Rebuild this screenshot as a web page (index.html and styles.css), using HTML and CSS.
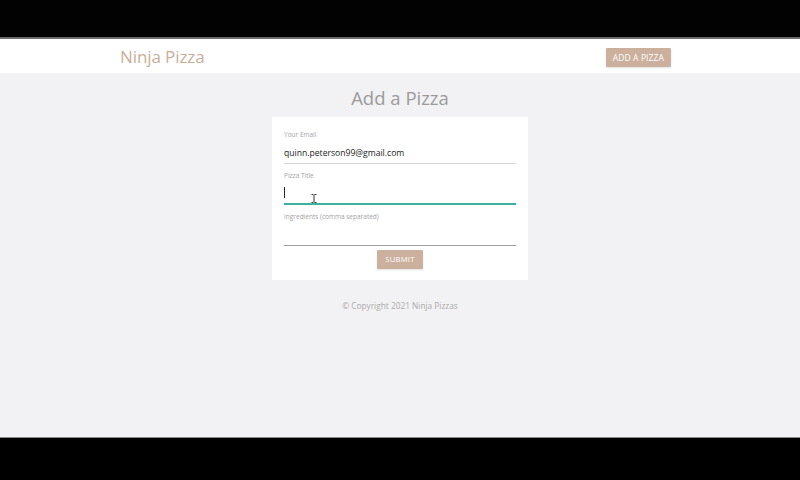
FILE: index.html
```html
<!DOCTYPE html>
<html>
<head>
<meta charset="utf-8">
<link rel="stylesheet" href="styles.css">
</head>
<body>
<div class="topband"></div>
<div class="screen">
  <nav class="nav">
    <div class="container nav-inner">
      <a class="brand">Ninja Pizza</a>
      <a class="btn">ADD A PIZZA</a>
    </div>
  </nav>
  <main class="main">
    <h4 class="title">Add a Pizza</h4>
    <form class="card">
      <label class="label">Your Email</label>
      <div class="field">quinn.peterson99@gmail.com</div>
      <label class="label">Pizza Title</label>
      <div class="field active"><span class="caret"></span><span class="ibeam"><svg width="6" height="9" viewBox="0 0 6 9"><path d="M0.5 0.5h2M3.5 0.5h2M3 1v7M0.5 8.5h2M3.5 8.5h2" stroke="#333" stroke-width="1" fill="none"/></svg></span></div>
      <label class="label">Ingredients (comma separated)</label>
      <div class="field dark"></div>
      <div class="center"><button type="button" class="btn submit">SUBMIT</button></div>
    </form>
    <footer class="footer">© Copyright 2021 Ninja Pizzas</footer>
  </main>
</div>
<div class="bottomband"></div>
</body>
</html>
```
FILE: styles.css
```css
html, body { margin: 0; padding: 0; background: #000; }
body { font-family: "Open Sans", "Liberation Sans", sans-serif; width: 800px; height: 480px; overflow: hidden; }
.topband { box-sizing: border-box; height: 39px; background: #020202; border-bottom: 2px solid #6b6b6b; }
.screen { height: 398px; background: #f2f1f3; display: flex; flex-direction: column; box-sizing: border-box; border-top: 1px solid #fff; }
.bottomband { height: 43px; background: #000; border-top: 1px solid #888; box-sizing: border-box; }
.nav { background: #fff; height: 33px; }
.container { width: 560px; margin: 0 auto; }
.nav-inner { display: flex; align-items: center; justify-content: space-between; height: 100%; padding-right: 9px; box-sizing: border-box; }
.brand { color: #cbae99; font-size: 17px; letter-spacing: -0.1px; }
.btn { background: #cbb09d; color: #fff; font-size: 8.5px; letter-spacing: 0.1px; height: 19px; line-height: 19px; padding: 0 7px; border-radius: 1px; box-shadow: 0 1px 2px rgba(0,0,0,0.12); font-family: inherit; border: 0; }
.nav .btn { margin-top: 2px; }
.main { display: flex; flex-direction: column; align-items: center; }
.title { margin: 13px 0 0; font-size: 18.5px; font-weight: 400; color: #9b9b9b; line-height: 24px; }
.card { background: #fff; width: 256px; margin-top: 7px; padding: 13px 12px 11px; box-sizing: border-box; display: flex; flex-direction: column; }
.label { font-size: 6.5px; color: #a3a3a3; line-height: 9px; }
.field { height: 20px; border-bottom: 1px solid #d6d6d6; font-size: 8.6px; color: #222; line-height: 20px; margin: 4px 0 7px; position: relative; }
.field.active { border-bottom: 2px solid #3bb3a3; height: 19px; }
.field.dark { border-bottom-color: #9e9e9e; margin-bottom: 4px; }
.caret { position: absolute; left: 0; top: 3px; width: 1px; height: 11px; background: #222; }
.ibeam { position: absolute; left: 27px; top: 10px; line-height: 0; }
.center { display: flex; justify-content: center; }
.submit { padding: 0 8px; font-size: 7.6px; letter-spacing: 0.3px; }
.footer { margin-top: 20px; font-size: 8.3px; color: #ababab; }
```
